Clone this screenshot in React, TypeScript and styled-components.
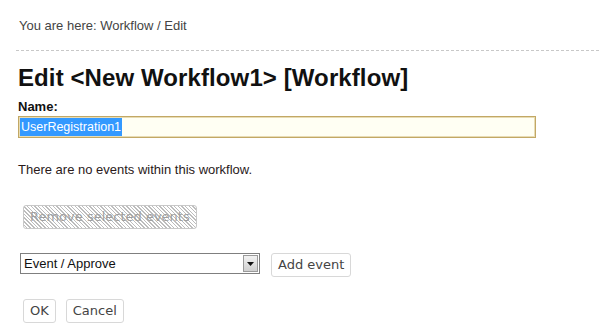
import React from "react"
import styled, { createGlobalStyle } from "styled-components"

const GlobalStyle = createGlobalStyle`
	html, body {
		margin: 0;
		padding: 0;
		background: #ffffff;
	}
	body {
		font-family: "Liberation Sans", Arial, sans-serif;
		color: #222;
	}
	::selection {
		background: #3399ff;
		color: #ffffff;
	}
`

const Page = styled.div`
	width: 599px;
	height: 334px;
	box-sizing: border-box;
	padding: 18px 0 0 18px;
	overflow: hidden;
`

const Breadcrumb = styled.div`
	font-size: 13px;
	line-height: 16px;
	color: #444;
	padding-left: 1px;
`

const Divider = styled.div`
	margin: 16px 0 0 -2px;
	height: 1px;
	background-image: linear-gradient(to right, #c8c8c8 60%, transparent 60%);
	background-size: 5px 1px;
	background-repeat: repeat-x;
`

const Title = styled.h1`
	margin: 13px 0 0 0;
	font-size: 24px;
	line-height: 28px;
	font-weight: bold;
	color: #111;
	letter-spacing: 0.1px;
`

const Label = styled.label`
	display: block;
	margin-top: 7px;
	font-size: 13px;
	line-height: 16px;
	font-weight: bold;
	color: #111;
`

const NameInput = styled.div`
	margin-top: 1px;
	width: 518px;
	height: 22px;
	box-sizing: border-box;
	border: 1px solid #c2a865;
	box-shadow: inset 0 0 0 1px #e8dcb4;
	background: #fffff3;
	padding: 1px 0 0 1px;
	font-size: 12.5px;
	line-height: 18px;
`

const Selected = styled.span`
	display: inline-block;
	background: #3399ff;
	color: #ffffff;
	padding: 0 1px;
	line-height: 18px;
`

const Info = styled.p`
	margin: 24px 0 0 0;
	font-size: 13px;
	line-height: 16px;
	color: #2a1a1a;
`

const Button = styled.button<{ $disabled?: boolean }>`
	font-family: "DejaVu Sans", Verdana, sans-serif;
	font-size: 13px;
	line-height: 16px;
	height: 24px;
	padding: 0 6px;
	border: 1px solid ${(p) => (p.$disabled ? "#c8c8c8" : "#d8d8d8")};
	border-radius: 3px;
	color: ${(p) => (p.$disabled ? "#a0a0a0" : "#444")};
	background: ${(p) =>
		p.$disabled
			? "repeating-linear-gradient(45deg, #ffffff 0px, #ffffff 1.6px, #bdbdbd 1.6px, #bdbdbd 2.6px)"
			: "#ffffff"};
	cursor: ${(p) => (p.$disabled ? "default" : "pointer")};
	margin: 0;
`

const RemoveRow = styled.div`
	margin: 27px 0 0 5px;
`

const EventRow = styled.div`
	display: flex;
	align-items: flex-start;
	gap: 11px;
	margin: 24px 0 0 2px;
`

const SelectBox = styled.div`
	width: 240px;
	height: 21px;
	box-sizing: border-box;
	border: 1px solid #7f7f7f;
	display: flex;
	align-items: center;
	justify-content: space-between;
	background: #ffffff;
	font-size: 13px;
	color: #111;
	padding-left: 3px;
`

const SelectArrow = styled.span`
	width: 15px;
	height: 17px;
	margin-right: 1px;
	box-sizing: border-box;
	border: 1px solid #9a9a9a;
	background: linear-gradient(to bottom, #f2f2f2, #cfcfcf);
	display: flex;
	align-items: center;
	justify-content: center;
`

const ActionRow = styled.div`
	display: flex;
	gap: 10px;
	margin: 22px 0 0 5px;
`

const App: React.FC = () => {
	return (
		<>
			<GlobalStyle />
			<Page>
				<Breadcrumb>You are here: Workflow / Edit</Breadcrumb>
				<Divider />
				<Title>Edit &lt;New Workflow1&gt; [Workflow]</Title>
				<Label>Name:</Label>
				<NameInput>
					<Selected>UserRegistration1</Selected>
				</NameInput>
				<Info>There are no events within this workflow.</Info>
				<RemoveRow>
					<Button $disabled>Remove selected events</Button>
				</RemoveRow>
				<EventRow>
					<SelectBox>
						<span>Event / Approve</span>
						<SelectArrow>
							<svg width="7" height="4" viewBox="0 0 7 4">
								<path d="M0 0 L7 0 L3.5 4 Z" fill="#111" />
							</svg>
						</SelectArrow>
					</SelectBox>
					<Button>Add event</Button>
				</EventRow>
				<ActionRow>
					<Button>OK</Button>
					<Button>Cancel</Button>
				</ActionRow>
			</Page>
		</>
	)
}

export default App
